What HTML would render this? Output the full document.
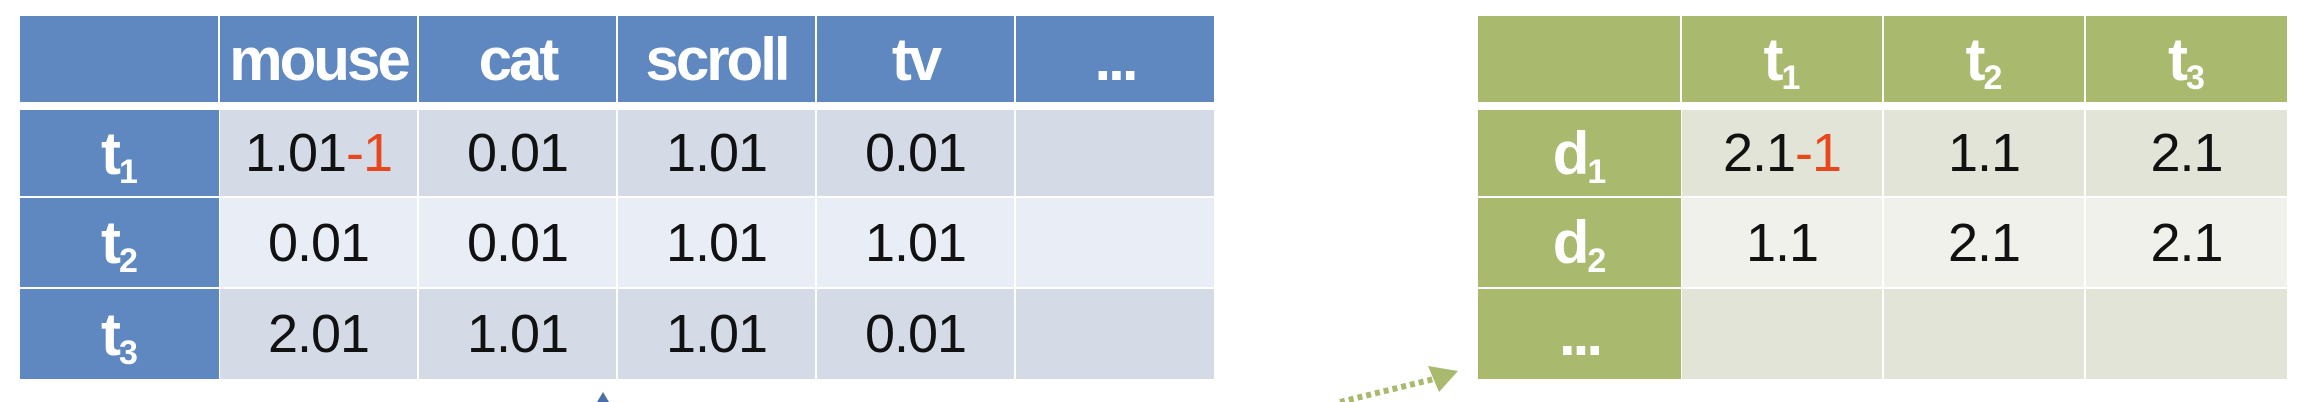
<!DOCTYPE html>
<html><head><meta charset="utf-8"><style>
html,body{margin:0;padding:0;background:#fff;width:2302px;height:402px;overflow:hidden;position:relative;font-family:"Liberation Sans",Arial,sans-serif}
.c{position:absolute;box-sizing:border-box;display:flex;align-items:center;justify-content:center}
.h{color:#fff;font-weight:bold;font-size:60px;letter-spacing:-3px}
.n{color:#111;font-size:54px;letter-spacing:-1px}
.r{color:#e8461c}
.s{font-size:34px;position:relative;top:9px;letter-spacing:0;margin-left:1px}
</style></head><body>
<!-- left table -->
<div class="c h" style="left:20px;top:16px;width:198px;height:86px;background:#5f88c0"></div>
<div class="c h" style="left:220px;top:16px;width:197px;height:86px;background:#5f88c0">mouse</div>
<div class="c h" style="left:419px;top:16px;width:197px;height:86px;background:#5f88c0">cat</div>
<div class="c h" style="left:618px;top:16px;width:197px;height:86px;background:#5f88c0">scroll</div>
<div class="c h" style="left:817px;top:16px;width:197px;height:86px;background:#5f88c0">tv</div>
<div class="c h" style="left:1016px;top:16px;width:198px;height:86px;background:#5f88c0">...</div>

<div class="c h" style="left:20px;top:110px;width:199px;height:86px;background:#5f88c0"><span>t<span class="s">1</span></span></div>
<div class="c h" style="left:20px;top:198px;width:199px;height:89px;background:#5f88c0"><span>t<span class="s">2</span></span></div>
<div class="c h" style="left:20px;top:289px;width:199px;height:90px;background:#5f88c0"><span>t<span class="s">3</span></span></div>

<div class="c n" style="left:220px;top:110px;width:197px;height:86px;background:#d4dbe7"><span>1.01<span class="r">-1</span></span></div>
<div class="c n" style="left:419px;top:110px;width:197px;height:86px;background:#d4dbe7">0.01</div>
<div class="c n" style="left:618px;top:110px;width:197px;height:86px;background:#d4dbe7">1.01</div>
<div class="c n" style="left:817px;top:110px;width:197px;height:86px;background:#d4dbe7">0.01</div>
<div class="c n" style="left:1016px;top:110px;width:198px;height:86px;background:#d4dbe7"></div>

<div class="c n" style="left:220px;top:198px;width:197px;height:89px;background:#e9edf5">0.01</div>
<div class="c n" style="left:419px;top:198px;width:197px;height:89px;background:#e9edf5">0.01</div>
<div class="c n" style="left:618px;top:198px;width:197px;height:89px;background:#e9edf5">1.01</div>
<div class="c n" style="left:817px;top:198px;width:197px;height:89px;background:#e9edf5">1.01</div>
<div class="c n" style="left:1016px;top:198px;width:198px;height:89px;background:#e9edf5"></div>

<div class="c n" style="left:220px;top:289px;width:197px;height:90px;background:#d4dbe7">2.01</div>
<div class="c n" style="left:419px;top:289px;width:197px;height:90px;background:#d4dbe7">1.01</div>
<div class="c n" style="left:618px;top:289px;width:197px;height:90px;background:#d4dbe7">1.01</div>
<div class="c n" style="left:817px;top:289px;width:197px;height:90px;background:#d4dbe7">0.01</div>
<div class="c n" style="left:1016px;top:289px;width:198px;height:90px;background:#d4dbe7"></div>

<!-- right table -->
<div class="c h" style="left:1478px;top:16px;width:202px;height:86px;background:#a9b96d"></div>
<div class="c h" style="left:1682px;top:16px;width:200px;height:86px;background:#a9b96d"><span>t<span class="s">1</span></span></div>
<div class="c h" style="left:1884px;top:16px;width:200px;height:86px;background:#a9b96d"><span>t<span class="s">2</span></span></div>
<div class="c h" style="left:2086px;top:16px;width:201px;height:86px;background:#a9b96d"><span>t<span class="s">3</span></span></div>

<div class="c h" style="left:1478px;top:110px;width:203px;height:86px;background:#a9b96d"><span>d<span class="s">1</span></span></div>
<div class="c h" style="left:1478px;top:198px;width:203px;height:89px;background:#a9b96d"><span>d<span class="s">2</span></span></div>
<div class="c h" style="left:1478px;top:289px;width:203px;height:90px;background:#a9b96d">...</div>

<div class="c n" style="left:1682px;top:110px;width:200px;height:86px;background:#e3e4d8"><span>2.1<span class="r">-1</span></span></div>
<div class="c n" style="left:1884px;top:110px;width:200px;height:86px;background:#e3e4d8">1.1</div>
<div class="c n" style="left:2086px;top:110px;width:201px;height:86px;background:#e3e4d8">2.1</div>
<div class="c n" style="left:1682px;top:198px;width:200px;height:89px;background:#f0f1ea">1.1</div>
<div class="c n" style="left:1884px;top:198px;width:200px;height:89px;background:#f0f1ea">2.1</div>
<div class="c n" style="left:2086px;top:198px;width:201px;height:89px;background:#f0f1ea">2.1</div>
<div class="c n" style="left:1682px;top:289px;width:200px;height:90px;background:#e3e4d8"></div>
<div class="c n" style="left:1884px;top:289px;width:200px;height:90px;background:#e3e4d8"></div>
<div class="c n" style="left:2086px;top:289px;width:201px;height:90px;background:#e3e4d8"></div>

<svg style="position:absolute;left:0;top:0" width="2302" height="402">
  <polygon points="603,392 597,402 609,402" fill="#4a70a8"/>
  <line x1="1340" y1="402" x2="1434" y2="379" stroke="#a9b96d" stroke-width="6" stroke-dasharray="5,4"/>
  <polygon points="1458,371 1428,366 1439,392" fill="#a9b96d"/>
</svg>
</body></html>
